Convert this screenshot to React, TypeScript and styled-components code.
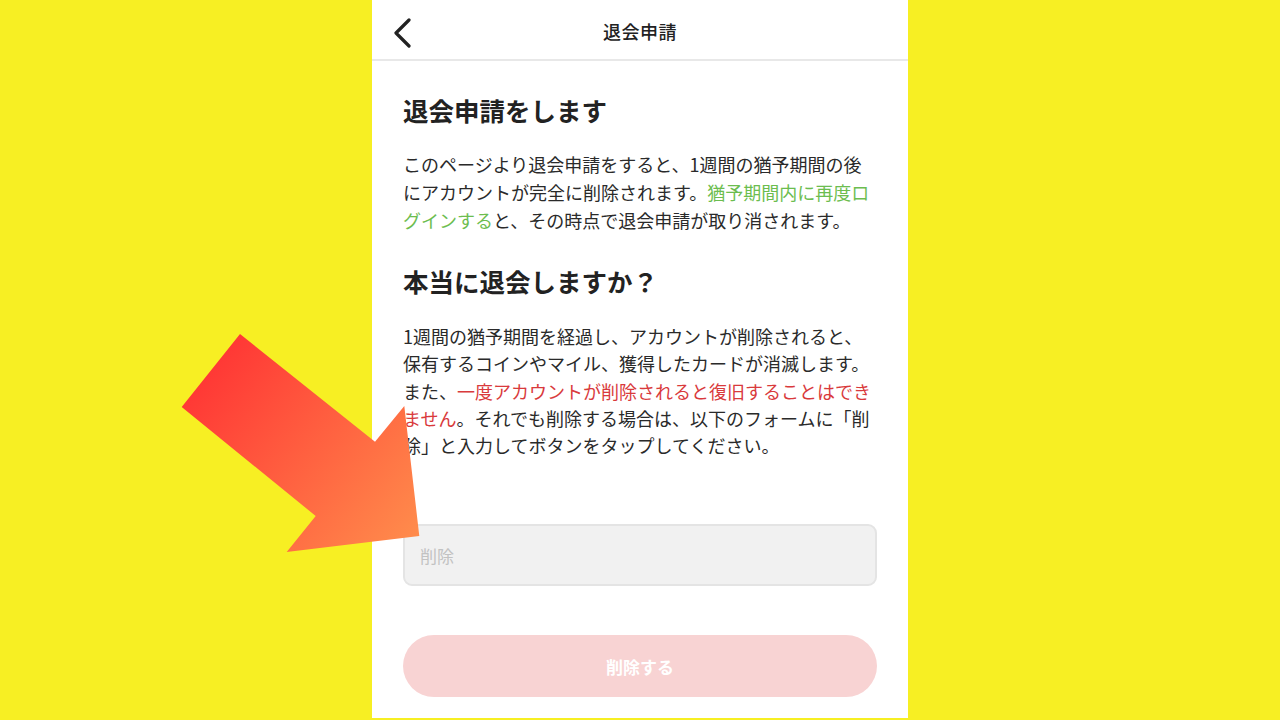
import React from "react"
import styled, { createGlobalStyle } from "styled-components"

const GlobalStyle = createGlobalStyle`
    html, body {
        margin: 0;
        padding: 0;
        background: #f7ef23;
    }
    body {
        font-family: "Noto Sans CJK JP", "Noto Sans", sans-serif;
        color: #222;
    }
`

const Stage = styled.div`
    position: relative;
    width: 1280px;
    height: 720px;
    overflow: hidden;
    display: flex;
    justify-content: center;
`

const Panel = styled.div`
    width: 536px;
    height: 718px;
    background: #fff;
    display: flex;
    flex-direction: column;
`

const Header = styled.header`
    position: relative;
    height: 59px;
    border-bottom: 2px solid #e8e8e8;
    display: flex;
    align-items: center;
    justify-content: center;
`

const BackButton = styled.button`
    position: absolute;
    left: 16px;
    top: 14px;
    width: 32px;
    height: 36px;
    padding: 0;
    border: none;
    background: none;
    display: flex;
    align-items: center;
    justify-content: center;
`

const Title = styled.h1`
    margin: 2px 0 0;
    font-size: 18px;
    font-weight: 500;
    color: #222;
    letter-spacing: 0.5px;
`

const Content = styled.main`
    padding: 31px 31px 0;
    display: flex;
    flex-direction: column;
`

const Heading = styled.h2<{ $gap: number }>`
    margin: 0 0 ${(p) => p.$gap}px;
    font-size: 25.5px;
    line-height: 36px;
    font-weight: 700;
    color: #222;
`

const Paragraph = styled.p<{ $lh: number }>`
    margin: 0 0 29px;
    font-size: 18px;
    line-height: ${(p) => p.$lh}px;
    color: #2a2a2a;
    white-space: nowrap;
`

const Mark = styled.span<{ $tone: "green" | "red" }>`
    color: ${(p) => (p.$tone === "green" ? "#6cbd4f" : "#d93a3c")};
`

const Field = styled.input`
    box-sizing: border-box;
    margin-top: 36px;
    width: 100%;
    height: 62px;
    padding: 0 15px;
    border: 2px solid #e4e4e4;
    border-radius: 9px;
    background: #f1f1f1;
    font-family: inherit;
    font-size: 17px;
    color: #222;
    outline: none;
    &::placeholder {
        color: #c2c2c2;
    }
`

const SubmitButton = styled.button`
    margin-top: 49px;
    width: 100%;
    height: 62px;
    border: none;
    border-radius: 31px;
    background: #f8d3d3;
    color: #fff;
    font-family: inherit;
    font-size: 17px;
    font-weight: 700;
`

const Overlay = styled.svg`
    position: absolute;
    left: 0;
    top: 0;
    pointer-events: none;
`

const App: React.FC = () => {
    return (
        <>
            <GlobalStyle />
            <Stage>
                <Panel>
                    <Header>
                        <BackButton aria-label="戻る">
                            <svg width="20" height="32" viewBox="0 0 20 32">
                                <polyline
                                    points="15,4 2,17 15,30"
                                    fill="none"
                                    stroke="#222"
                                    strokeWidth="3.2"
                                    strokeLinecap="round"
                                    strokeLinejoin="round"
                                />
                            </svg>
                        </BackButton>
                        <Title>退会申請</Title>
                    </Header>
                    <Content>
                        <Heading $gap={22}>退会申請をします</Heading>
                        <Paragraph $lh={28}>
                            このページより退会申請をすると、1週間の猶予期間の後
                            <br />
                            にアカウントが完全に削除されます。<Mark $tone="green">猶予期間内に再度ロ</Mark>
                            <br />
                            <Mark $tone="green">グインする</Mark>と、その時点で退会申請が取り消されます。
                        </Paragraph>
                        <Heading $gap={24}>本当に退会しますか？</Heading>
                        <Paragraph $lh={27.3}>
                            1週間の猶予期間を経過し、アカウントが削除されると、
                            <br />
                            保有するコインやマイル、獲得したカードが消滅します。
                            <br />
                            また、<Mark $tone="red">一度アカウントが削除されると復旧することはでき</Mark>
                            <br />
                            <Mark $tone="red">ません</Mark>。それでも削除する場合は、以下のフォームに「削
                            <br />
                            除」と入力してボタンをタップしてください。
                        </Paragraph>
                        <Field placeholder="削除" />
                        <SubmitButton>削除する</SubmitButton>
                    </Content>
                </Panel>
                <Overlay width="1280" height="720" viewBox="0 0 1280 720">
                    <defs>
                        <linearGradient id="arrowFill" x1="200" y1="360" x2="420" y2="540" gradientUnits="userSpaceOnUse">
                            <stop offset="0" stopColor="#ff3434" />
                            <stop offset="1" stopColor="#ff8d4c" />
                        </linearGradient>
                    </defs>
                    <polygon
                        points="240,334 181.7,407 315.7,516 286.7,552 419.3,536 404.3,406 375,441.7"
                        fill="url(#arrowFill)"
                    />
                </Overlay>
            </Stage>
        </>
    )
}

export default App
